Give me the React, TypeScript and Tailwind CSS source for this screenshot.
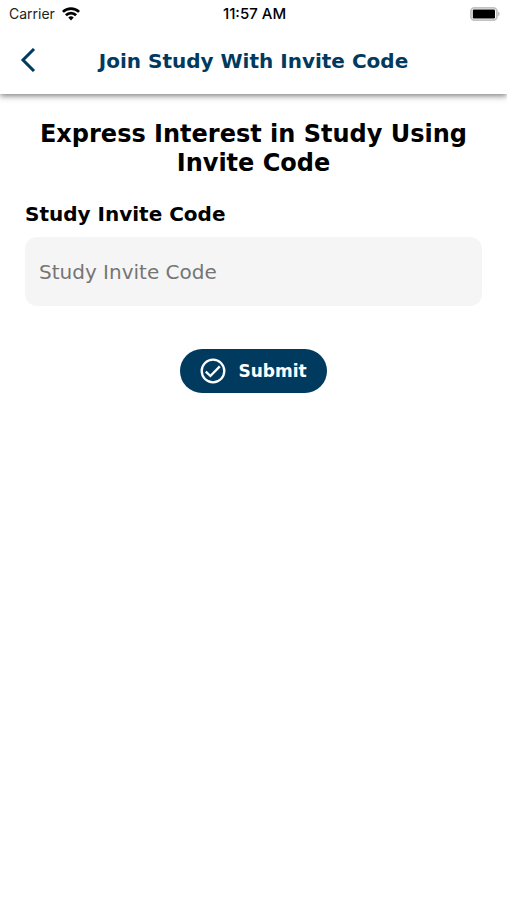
function WifiIcon() {
  return (
    <svg viewBox="0 0 18 14" className="h-3.5 w-4.5" fill="none" stroke="#000" strokeWidth="2.7" aria-hidden="true">
      <path d="M0.9 4.9a11.6 11.6 0 0 1 16.2 0" />
      <path d="M3.9 8.2a7.2 7.2 0 0 1 10.2 0" />
      <path d="M9 13.4 6.3 10.6a3.9 3.9 0 0 1 5.4 0Z" fill="#000" stroke="none" />
    </svg>
  );
}

function BatteryIcon() {
  return (
    <svg viewBox="0 0 30 14" className="h-3.5 w-7.5" aria-hidden="true">
      <rect x="0.9" y="0.9" width="26" height="12.2" rx="3.6" fill="#fff" stroke="#c2c2c2" strokeWidth="1.8" />
      <rect x="2.8" y="2.6" width="22.2" height="8.8" rx="1.2" fill="#000" />
      <path d="M28.2 4.8c1.8.6 1.8 3.8 0 4.4Z" fill="#b5b5b5" />
    </svg>
  );
}

function StatusBar() {
  return (
    <div className="grid h-7 grid-cols-3 items-center pr-[7px] pl-[9px] font-['Inter','Liberation_Sans',sans-serif] text-[#222]">
      <div className="flex items-center gap-[7px] text-sm">
        <span>Carrier</span>
        <WifiIcon />
      </div>
      <span className="text-center text-[15px] font-medium text-black">11:57 AM</span>
      <div className="flex justify-end">
        <BatteryIcon />
      </div>
    </div>
  );
}

export default function App() {
  return (
    <div className="min-h-screen bg-white font-['Verdana','DejaVu_Sans',sans-serif] text-black">
      <header className="bg-white shadow-[0_2px_6px_rgba(0,0,0,0.5)]">
        <StatusBar />
        <div className="grid h-[66px] grid-cols-[56px_1fr_56px] items-center">
          <button type="button" aria-label="Back" className="flex h-full items-center justify-center pb-[3px]">
            <svg viewBox="0 0 16 24" className="h-6 w-4" fill="none" stroke="#003b5f" strokeWidth="3" aria-hidden="true">
              <path d="M14 1 3 12l11 11" />
            </svg>
          </button>
          <h1 className="text-center text-xl font-bold text-[#003b5f]">Join Study With Invite Code</h1>
        </div>
      </header>

      <main className="px-[25px] pt-[26px]">
        <h2 className="text-center text-2xl leading-[29px] font-bold">
          Express Interest in Study Using Invite Code
        </h2>
        <form className="mt-[22px] flex flex-col" onSubmit={(event) => event.preventDefault()}>
          <label htmlFor="invite-code" className="text-xl font-bold">
            Study Invite Code
          </label>
          <input
            id="invite-code"
            type="text"
            placeholder="Study Invite Code"
            className="mt-[9px] h-[69px] w-full rounded-xl bg-[#f5f5f5] px-3.5 text-xl outline-none placeholder:text-[#757575]"
          />
          <button
            type="submit"
            className="mt-[43px] flex h-11 items-center gap-3 self-center rounded-full bg-[#003b5f] px-5 text-[17px] leading-7 font-bold text-white"
          >
            <svg viewBox="0 0 26 26" className="size-6.5" fill="none" stroke="currentColor" strokeWidth="2.3" aria-hidden="true">
              <circle cx="13" cy="13" r="11.3" />
              <path d="m5.8 13.6 4.6 4.4 9.4-9.6" />
            </svg>
            Submit
          </button>
        </form>
      </main>
    </div>
  );
}
